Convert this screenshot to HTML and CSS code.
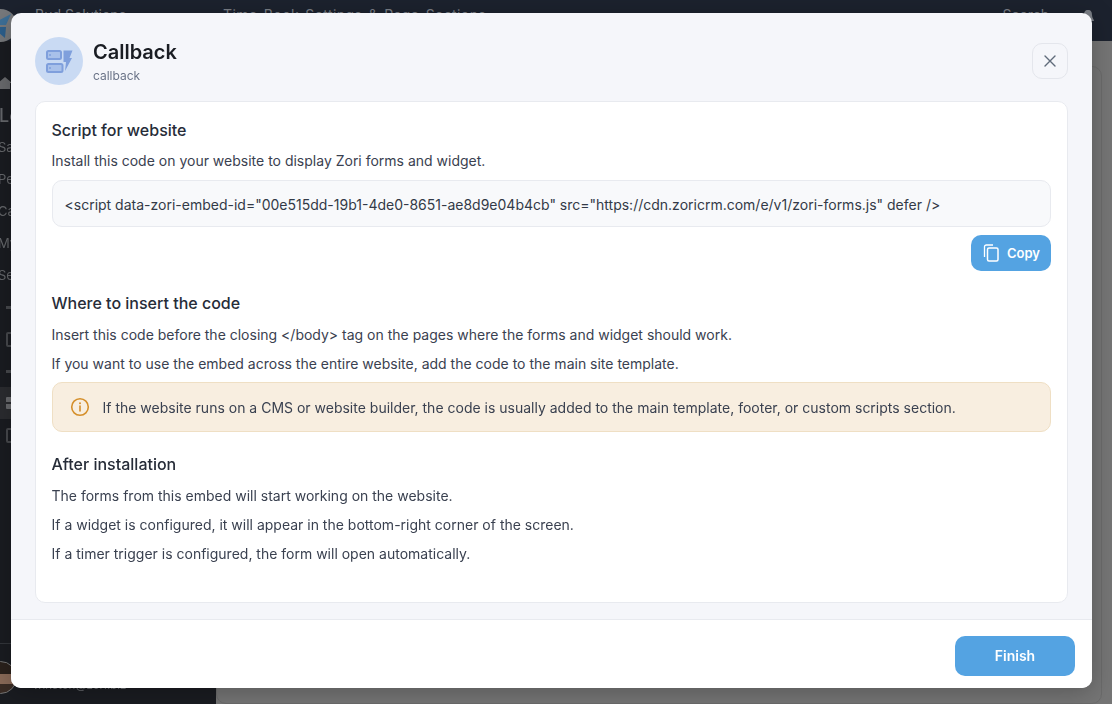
FILE: index.html
```html
<!DOCTYPE html>
<html lang="en">
<head>
  <meta charset="UTF-8">
  <title>Callback</title>
  <link rel="stylesheet" href="styles.css">
</head>
<body>

<!-- App behind the modal -->
<div class="app">
  <header class="topbar">
    <svg class="brand-logo" viewBox="0 0 33 33">
      <circle cx="16.500" cy="16.500" r="16.500" fill="#77797c"/>
      <path d="M6 16 27 5 22 16z" fill="#3d6f97"/>
      <path d="M8 18h14l-1 11z" fill="#2c5f8c"/>
    </svg>
    <span class="brand-name">Bud Solutions</span>
    <span class="topbar-title">Time Book Settings &amp; Page Sections</span>
    <span class="topbar-search">Search</span>
    <svg class="topbar-bell" viewBox="0 0 14 16" width="14" height="16"><path d="M7 1C4 1 3 3 3 6c0 3-2 4-2 6h12c0-2-2-3-2-6 0-3-1-5-4-5z" fill="#7b7f86"/></svg>
  </header>
  <div class="app-body">
    <aside class="sidebar">
      <nav class="side-nav">
        <div class="side-item"><svg class="side-svg" viewBox="0 0 14 14" width="14" height="14"><path d="M7 1 14 7h-2v6H2V7H0z" fill="#6a6b6e"/></svg></div>
        <div class="side-item side-large">Lo</div>
        <div class="side-item side-text">Sa</div>
        <div class="side-item side-text">Pe</div>
        <div class="side-item side-text">Ca</div>
        <div class="side-item side-text">My</div>
        <div class="side-item side-text">Se</div>
        <div class="side-item"><span class="mark mark-line"></span></div>
        <div class="side-item"><span class="mark mark-box"></span></div>
        <div class="side-item"><span class="mark mark-line"></span></div>
        <div class="side-item side-active"><span class="mark mark-grid"></span></div>
        <div class="side-item"><span class="mark mark-box"></span></div>
      </nav>
      <div class="side-user">
        <div class="avatar"></div>
        <span class="user-mail">winston@zori.biz</span>
      </div>
    </aside>
    <main class="content">
      <div class="content-card"></div>
    </main>
  </div>
</div>

<!-- Modal -->
<div class="modal">
  <div class="modal-head">
    <div class="modal-icon">
      <svg viewBox="0 0 28 28" width="28" height="28">
        <rect x="2" y="4" width="14" height="8" rx="1.500" fill="#a9c1ea" stroke="#7f9fdc" stroke-width="2"/>
        <rect x="2" y="17" width="15.500" height="8" rx="1.500" fill="#a9c1ea" stroke="#7f9fdc" stroke-width="2"/>
        <circle cx="5" cy="8" r="1" fill="#7f9fdc"/>
        <circle cx="5" cy="21" r="1" fill="#7f9fdc"/>
        <path d="M18.500 3.500H27.500L24.500 11H27L20 24 21 15H18.500Z" fill="#7f9fdc"/>
      </svg>
    </div>
    <div class="modal-title">
      <h1>Callback</h1>
      <p>callback</p>
    </div>
    <button class="close-btn">
      <svg viewBox="0 0 12 12" width="12" height="12"><path d="M1 1l10 10M11 1 1 11" fill="none" stroke="#5f6b7a" stroke-width="1.400" stroke-linecap="round"/></svg>
    </button>
  </div>

  <div class="modal-body">
    <div class="card">
      <h2>Script for website</h2>
      <p class="line">Install this code on your website to display Zori forms and widget.</p>
      <div class="code">&lt;script data-zori-embed-id="00e515dd-19b1-4de0-8651-ae8d9e04b4cb" src="https://cdn.zoricrm.com/e/v1/zori-forms.js" defer /&gt;</div>
      <div class="copy-row">
        <button class="button copy-btn">
          <svg viewBox="0 0 18 18" width="18" height="18"><path d="M2.500 13V2.800C2.500 1.800 3.300 1 4.300 1H11" fill="none" stroke="#fff" stroke-width="1.300"/><rect x="5.500" y="4" width="10.500" height="13" rx="1.500" fill="none" stroke="#fff" stroke-width="1.500"/></svg>
          Copy
        </button>
      </div>

      <h2 class="section">Where to insert the code</h2>
      <p class="line">Insert this code before the closing &lt;/body&gt; tag on the pages where the forms and widget should work.</p>
      <p class="line line-next">If you want to use the embed across the entire website, add the code to the main site template.</p>
      <div class="notice">
        <svg viewBox="0 0 20 20" width="20" height="20"><circle cx="10" cy="10" r="8.300" fill="none" stroke="#d58f2b" stroke-width="1.600"/><path d="M10 9v5" stroke="#d58f2b" stroke-width="1.600" stroke-linecap="round"/><circle cx="10" cy="6.300" r="1" fill="#d58f2b"/></svg>
        <span>If the website runs on a CMS or website builder, the code is usually added to the main template, footer, or custom scripts section.</span>
      </div>

      <h2 class="section">After installation</h2>
      <p class="line">The forms from this embed will start working on the website.</p>
      <p class="line line-next">If a widget is configured, it will appear in the bottom-right corner of the screen.</p>
      <p class="line line-next">If a timer trigger is configured, the form will open automatically.</p>
    </div>
  </div>

  <div class="modal-foot">
    <button class="button finish-btn">Finish</button>
  </div>
</div>

</body>
</html>
```

FILE: styles.css
```css
* {
  box-sizing: border-box;
}

html, body {
  margin: 0;
  height: 704px;
  overflow: hidden;
}

body {
  font-family: Inter, "Liberation Sans", sans-serif;
  background: #757575;
}

/* App behind the modal */
.app {
  height: 100%;
  display: flex;
  flex-direction: column;
  filter: blur(0.7px);
}

.topbar {
  height: 41px;
  display: flex;
  align-items: flex-start;
  padding-top: 5px;
  background: #1c222e;
  color: #7b7f86;
  font-size: 14px;
  line-height: 20px;
  flex-shrink: 0;
}

.brand-logo {
  width: 33px;
  height: 33px;
  margin: 4px 0 0 -16px;
  position: relative;
  z-index: 1;
}

.brand-name {
  width: 188px;
  margin-left: 18px;
}

.topbar-title {
  flex: 1;
  word-spacing: 2px;
  letter-spacing: 0.4px;
}

.topbar-search {
  margin-right: 32px;
}

.topbar-bell {
  margin: 4px 17px 0 0;
}

.app-body {
  flex: 1;
  display: flex;
  min-height: 0;
}

.sidebar {
  width: 216px;
  background: #1a1c21;
  display: flex;
  flex-direction: column;
  justify-content: space-between;
}

.side-nav {
  padding-top: 26px;
}

.side-item {
  height: 32px;
  display: flex;
  align-items: center;
  color: #66686c;
  font-size: 13px;
}

.side-text {
  margin-left: -2px;
}

.side-large {
  margin-left: -1px;
  font-size: 18px;
  font-weight: 500;
}

.side-svg {
  margin-left: -2px;
}

.mark {
  display: block;
  margin-left: 6px;
  width: 12px;
}

.mark-line {
  height: 3px;
  background: #47494d;
}

.mark-box {
  height: 15px;
  border: 2px solid #47494d;
  border-radius: 2px;
}

.mark-grid {
  height: 12px;
  background: linear-gradient(#6a6b6e 0 5px, transparent 5px 7px, #6a6b6e 7px);
  border-radius: 1px;
}

.side-active {
  background: #2b2c30;
}

.side-user {
  height: 61px;
  display: flex;
  gap: 16px;
  padding-top: 17px;
  border-top: 1px solid #33363b;
}

.avatar {
  width: 33px;
  height: 33px;
  margin-left: -16px;
  flex-shrink: 0;
  border-radius: 50%;
  border: 1px solid #777;
  background: linear-gradient(#2a211c 0 40%, #8a6a58 40% 70%, #3a2c25 70%);
}

.user-mail {
  margin-top: 15px;
  color: #66686c;
  font-size: 11.5px;
  line-height: 18px;
}

.content {
  flex: 1;
  padding: 25px 10px 0 0;
}

.content-card {
  height: 100%;
  border: 1px solid #6b6b6b;
  border-radius: 10px;
}

/* Modal */
.modal {
  position: fixed;
  left: 11px;
  top: 13px;
  width: 1081px;
  height: 675px;
  display: flex;
  flex-direction: column;
  background: #f5f6fa;
  border-radius: 10px;
  box-shadow: 0 4px 24px rgba(0,0,0,0.25);
  overflow: hidden;
}

.modal-head {
  height: 88px;
  display: flex;
  align-items: center;
  padding: 8px 24px 0;
  flex-shrink: 0;
}

.modal-icon {
  width: 48px;
  height: 48px;
  border-radius: 50%;
  background: #c9daf3;
  display: flex;
  align-items: center;
  justify-content: center;
}

.modal-title {
  flex: 1;
  margin-left: 10px;
}

.modal-title h1 {
  margin: 0;
  font-size: 20px;
  line-height: 26px;
  font-weight: 600;
  color: #1a1d23;
}

.modal-title p {
  margin: 3px 0 0;
  font-size: 12px;
  line-height: 16px;
  color: #6b7488;
}

.close-btn {
  width: 36px;
  height: 36px;
  display: flex;
  align-items: center;
  justify-content: center;
  padding: 0;
  background: #f5f6fa;
  border: 1px solid #e4e6ec;
  border-radius: 10px;
}

.modal-body {
  flex: 1;
  padding: 0 24px 16px;
  min-height: 0;
}

.card {
  height: 100%;
  padding: 18px 16px 18px 15.5px;
  background: #fff;
  border: 1px solid #e8eaef;
  border-radius: 10px;
}

.card h2 {
  margin: 0;
  font-size: 16px;
  line-height: 20px;
  font-weight: 500;
  color: #262c38;
}

.card .section {
  margin-top: 22px;
}

.line {
  margin: 11px 0 0;
  font-size: 14px;
  line-height: 20px;
  color: #3a4150;
}

.section + .line {
  margin-top: 12px;
}

.card .line-next {
  margin-top: 9px;
}

.code {
  margin-top: 9px;
  height: 47px;
  padding: 1px 12px 0;
  display: flex;
  align-items: center;
  font-size: 14px;
  white-space: nowrap;
  color: #333a47;
  background: #f8f9fb;
  border: 1px solid #e8eaef;
  border-radius: 10px;
}

.copy-row {
  display: flex;
  justify-content: flex-end;
  margin-top: 8px;
}

.button {
  border: none;
  border-radius: 10px;
  background: #54a3e2;
  color: #fff;
  font-family: inherit;
  font-weight: 600;
  cursor: pointer;
}

.copy-btn {
  width: 80px;
  height: 36px;
  display: flex;
  align-items: center;
  justify-content: center;
  gap: 7px;
  padding: 0;
  font-size: 13px;
}

.notice {
  margin-top: 8px;
  height: 50px;
  padding: 0 17px;
  display: flex;
  align-items: center;
  gap: 13px;
  font-size: 14px;
  color: #3a4150;
  background: #f8eee0;
  border: 1px solid #efdfc4;
  border-radius: 10px;
}

.modal-foot {
  height: 69px;
  display: flex;
  align-items: flex-start;
  justify-content: flex-end;
  padding: 16px 17px 0;
  background: #fff;
  border-top: 1px solid #e8eaef;
  flex-shrink: 0;
}

.finish-btn {
  width: 120px;
  height: 40px;
  padding: 0 0 2px;
  font-size: 14px;
}
```
